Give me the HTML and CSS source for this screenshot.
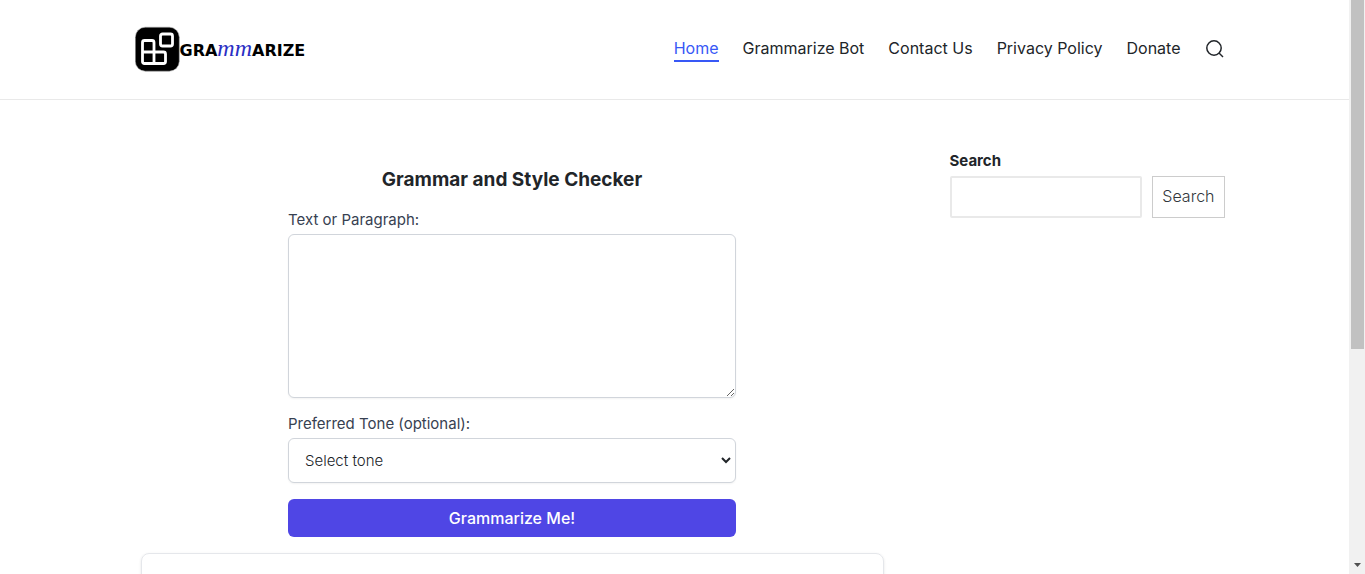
FILE: index.html
```html
<!DOCTYPE html>
<html lang="en">
  <head>
    <meta charset="utf-8" />
    <meta name="viewport" content="width=device-width, initial-scale=1" />
    <title>Grammarize</title>
    <link rel="stylesheet" href="styles.css">
  </head>

  <body>
    <div class="page">
      <header class="site-header">
        <div class="container header-inner">
          <a class="logo" href="#">
            <svg width="45" height="46" viewBox="0 0 45 46" aria-hidden="true">
              <rect x="0.3" y="1.2" width="44" height="44" rx="10" fill="#000" stroke="#aaa" stroke-width="0.6" />
              <g fill="none" stroke="#fff" stroke-width="2.8" stroke-linejoin="round">
                <path d="M9.500 14.500H17Q19 14.500 19 16.500V26H28.500Q30.500 26 30.500 28V35.500Q30.500 37.500 28.500 37.500H9.500Q7.500 37.500 7.500 35.500V16.500Q7.500 14.500 9.500 14.500ZM7.500 26H19V37.500" />
                <rect x="25.500" y="8" width="12" height="12" rx="2" />
              </g>
            </svg>
            <span class="logo-text">GRA<span class="logo-script">mm</span>ARIZE</span>
          </a>
          <nav class="menu">
            <a class="active" href="#">Home</a>
            <a href="#">Grammarize Bot</a>
            <a href="#">Contact Us</a>
            <a href="#">Privacy Policy</a>
            <a href="#">Donate</a>
            <button class="search-toggle" type="button" aria-label="Open search">
              <svg width="20" height="20" viewBox="0 0 20 20" fill="none" stroke="currentColor" stroke-width="1.5">
                <circle cx="9" cy="9" r="7.2" />
                <path d="M14 14l4 4" />
              </svg>
            </button>
          </nav>
        </div>
      </header>

      <div class="container content">
        <main class="main">
          <form class="checker">
            <h1>Grammar and Style Checker</h1>
            <label for="text">Text or Paragraph:</label>
            <textarea id="text" name="text"></textarea>
            <label for="tone">Preferred Tone (optional):</label>
            <div class="select-wrap">
              <select id="tone" name="tone">
                <option>Select tone</option>
              </select>
              <svg class="chevron" width="10" height="7" viewBox="0 0 10 7" aria-hidden="true">
                <path d="M1 1l4 4 4-4" fill="none" stroke="#212529" stroke-width="2" />
              </svg>
            </div>
            <button class="submit" type="button">Grammarize Me!</button>
          </form>
          <section class="result"></section>
        </main>

        <aside class="sidebar">
          <form>
            <label for="search">Search</label>
            <div class="search-row">
              <input id="search" type="search" name="s" />
              <button type="button">Search</button>
            </div>
          </form>
        </aside>
      </div>
    </div>
    <div class="scrollbar" aria-hidden="true">
      <div class="scrollbar-thumb"></div>
      <svg width="7" height="4" viewBox="0 0 7 4"><path d="M0 0h7L3.500 4z" fill="#505050" /></svg>
    </div>
  </body>
</html>
```

FILE: styles.css
```css
* {
  box-sizing: border-box;
}
body {
  margin: 0;
  display: flex;
  height: 100vh;
  overflow: hidden;
  background-color: #fff;
  color: #212529;
  font-family: Inter, sans-serif;
  font-size: 15px;
}
button,
input,
select,
textarea {
  font: inherit;
  color: inherit;
}
.page {
  flex: 1;
  min-width: 0;
  overflow: hidden;
}
.container {
  width: 100%;
  max-width: 1100px;
  margin: 0 auto;
}
.site-header {
  border-bottom: 1px solid #e9e9e9;
}
.header-inner {
  display: flex;
  align-items: center;
  justify-content: space-between;
  padding: 26px 0 27px 10px;
}
.logo {
  display: flex;
  align-items: center;
  color: #000;
  text-decoration: none;
}
.logo-text {
  font-family: "DejaVu Sans", sans-serif;
  font-size: 16px;
  font-weight: 700;
  line-height: 24px;
}
.logo-script {
  color: #2a2fc4;
  font-family: "Liberation Serif", serif;
  font-size: 24px;
  font-style: italic;
  font-weight: 400;
  line-height: 1;
}
.menu {
  display: flex;
  align-items: center;
  gap: 24px;
}
.menu a {
  border-bottom: 2px solid transparent;
  color: inherit;
  font-size: 16px;
  line-height: 24px;
  text-decoration: none;
}
.menu .active {
  border-color: #3858f6;
  color: #3858f6;
}
.search-toggle {
  display: flex;
  padding: 0;
  border: 0;
  background: none;
}
.content {
  display: flex;
  gap: 50px;
  padding-top: 50px;
}
.main {
  flex: 1;
  padding: 16px;
}
.checker {
  display: flex;
  flex-direction: column;
  max-width: 448px;
  margin: 0 auto 16px;
}
.checker h1 {
  margin: 0 0 16px;
  font-size: 19px;
  font-weight: 700;
  line-height: 28px;
  text-align: center;
}
.checker label {
  margin-bottom: 4px;
  color: #374151;
  font-size: 15px;
  line-height: 20px;
}
.checker textarea,
.checker select {
  width: 100%;
  padding: 8px 16px;
  border: 1px solid #d1d5db;
  border-radius: 6px;
  background-color: #fff;
  box-shadow: 0 1px 2px rgba(0, 0, 0, 0.05);
}
.checker textarea {
  height: 164px;
  margin-bottom: 16px;
}
.select-wrap {
  position: relative;
  margin-bottom: 16px;
}
.checker select {
  display: block;
  height: 45px;
  appearance: none;
  font-weight: 300;
}
.chevron {
  position: absolute;
  top: 19px;
  right: 5px;
  pointer-events: none;
}
.submit {
  height: 38px;
  border: 0;
  border-radius: 6px;
  background-color: #4f46e5;
  color: #fff;
  font-size: 16px;
  font-weight: 500;
}
.result {
  min-height: 200px;
  border: 1px solid #e5e7eb;
  border-radius: 8px;
  box-shadow: 0 1px 3px rgba(0, 0, 0, 0.1);
}
.sidebar {
  width: 25%;
}
.sidebar label {
  display: block;
  margin-bottom: 4px;
  font-weight: 700;
  line-height: 22px;
}
.search-row {
  display: flex;
  gap: 10px;
  height: 42px;
}
.search-row input {
  flex: 1;
  min-width: 0;
  border: 2px solid #e9e9e9;
  border-radius: 2px;
}
.search-row button {
  padding: 0 9px 2px;
  border: 1px solid #ccc;
  background-color: #fff;
  color: #32373c;
  font-size: 16px;
  font-weight: 300;
}
.scrollbar {
  display: flex;
  flex-direction: column;
  justify-content: space-between;
  align-items: center;
  width: 16px;
  padding-bottom: 7px;
  background-color: #f1f1f1;
}
.scrollbar-thumb {
  width: 13px;
  height: 61.5%;
  background-color: #c1c1c1;
}
```
